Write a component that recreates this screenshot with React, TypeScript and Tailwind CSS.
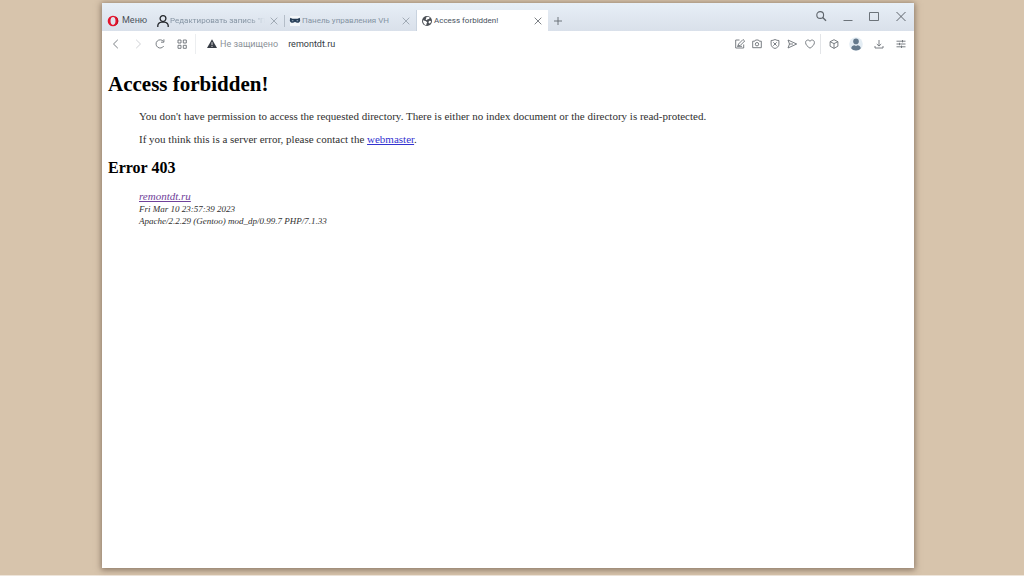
import type { ReactNode } from "react";

interface IconProps {
  children: ReactNode;
  className?: string;
}

function Icon({ children, className = "size-3" }: IconProps) {
  return (
    <svg
      viewBox="0 0 12 12"
      fill="none"
      stroke="currentColor"
      strokeWidth="0.9"
      aria-hidden="true"
      className={`shrink-0 ${className}`}
    >
      {children}
    </svg>
  );
}

interface IconButtonProps {
  label: string;
  className: string;
  children: ReactNode;
}

function IconButton({ label, className, children }: IconButtonProps) {
  return (
    <button
      type="button"
      aria-label={label}
      className={`flex shrink-0 items-center justify-center ${className}`}
    >
      {children}
    </button>
  );
}

function PersonIcon() {
  return (
    <Icon className="size-3 text-[#24272c]">
      <g strokeWidth="1.3">
        <circle cx="6" cy="3.6" r="2.9" />
        <path d="M.8 12V10.6C1 8.6 2.6 7.4 4.6 7.1h2.8c2 .3 3.6 1.5 3.8 3.5V12" />
      </g>
    </Icon>
  );
}

function PanelIcon() {
  return (
    <svg viewBox="0 0 12 12" aria-hidden="true" className="size-3 shrink-0">
      <path fill="#f4f7fa" d="M1 1h10v10H1z" />
      <path
        fill="#273e57"
        d="M1.2 2.8l2.2.9h5.200l2.200-.9.4 2.600c-.3 1.600-1.300 2.400-2.700 2.400-1 0-1.800-.3-2.500-1-.7.7-1.500 1-2.500 1C2.100 7.800 1.100 7 .8 5.400z"
      />
      <path fill="#9db0c2" d="M2.800 5.200h1.600v1H2.800zM7.600 5.200h1.600v1H7.600z" />
    </svg>
  );
}

function GlobeIcon() {
  return (
    <svg viewBox="0 0 12 12" aria-hidden="true" className="size-3 shrink-0">
      <circle cx="6" cy="6" r="5" fill="#4c5056" />
      <path
        fill="#fff"
        d="M1.900 5.300L4.600 6l1.600 1.300-.6 1.200-.4 1.700C3.200 9.900 1.900 8 1.900 5.300zM5.400 2l2-.2 1.500 1-1 1.300-1.300.1-.9 1-1.100-.6.6-1.400zM8.200 5.800l1.900.2-.6 2-1.300.6-.8-1.300z"
      />
    </svg>
  );
}

interface TabProps {
  title: string;
  icon: ReactNode;
  active?: boolean;
  faded?: boolean;
}

function Tab({ title, icon, active = false, faded = false }: TabProps) {
  return (
    <div
      className={`flex h-[21px] w-[131px] min-w-0 items-center pl-1 ${
        active ? "bg-white text-[#46505b]" : "text-[#8594a3]"
      }`}
    >
      <button type="button" className="flex h-full min-w-0 flex-1 items-center text-left">
        {icon}
        <span
          className={`block min-w-0 flex-1 whitespace-nowrap pl-px text-[8px] leading-3 ${
            faded ? "[mask-image:linear-gradient(to_right,#000_85%,transparent)]" : ""
          }`}
        >
          {title}
        </span>
      </button>
      <IconButton label={`Закрыть ${title}`} className="mr-px h-[21px] w-[18px]">
        <Icon className={`size-[10px] ${active ? "text-[#50565d]" : "text-[#8c96a1]"}`}>
          <path d="M2 2l8 8M10 2l-8 8" />
        </Icon>
      </IconButton>
    </div>
  );
}

function TabBar() {
  return (
    <header className="flex h-7 items-end bg-linear-to-b from-[#e7eff7] to-[#d9e0ea]">
      <button
        type="button"
        className="flex h-[21px] w-[51px] shrink-0 items-center gap-[3px] pl-[5px] text-[9px] text-[#4c535b]"
      >
        <svg viewBox="0 0 12 12" aria-hidden="true" className="size-3 shrink-0">
          <path
            fill="#e5142d"
            fillRule="evenodd"
            d="M6 .7a5.300 5.300 0 100 10.600A5.300 5.300 0 006 .7zm0 1.400c1.600 0 2.500 1.600 2.500 3.900S7.600 9.900 6 9.900 3.500 8.300 3.500 6 4.400 2.100 6 2.100z"
          />
          <path
            fill="#b31022"
            d="M7.500 1.600c1.900.5 2.800 2.200 2.800 4.400s-.9 3.900-2.800 4.400c2.100.1 3.800-1.900 3.800-4.400S9.600 1.500 7.500 1.600z"
          />
        </svg>
        Меню
      </button>

      <nav aria-label="Вкладки" className="flex min-w-0 items-end">
        <Tab title={'Редактировать запись "Пе'} icon={<PersonIcon />} faded />
        <span className="mb-1 h-3 w-px shrink-0 bg-[#b4bdc8]" />
        <Tab title="Панель управления VH" icon={<PanelIcon />} />
        <span className="h-[21px] w-px shrink-0 bg-[#c9d3df]" />
        <Tab title="Access forbidden!" icon={<GlobeIcon />} active />
      </nav>
      <IconButton label="Новая вкладка" className="h-[21px] w-5 text-[#626971]">
        <Icon>
          <path d="M6 2v8M2 6h8" />
        </Icon>
      </IconButton>

      <div className="ml-auto flex shrink-0 self-start pt-px text-[#5f656c]">
        <IconButton label="Поиск" className="h-6 w-[27px]">
          <Icon>
            <circle cx="5.200" cy="5" r="3.400" strokeWidth="1.100" />
            <path d="M7.700 7.500l3.300 3.200" strokeWidth="1.400" />
          </Icon>
        </IconButton>
        <IconButton label="Свернуть" className="h-6 w-[27px]">
          <Icon>
            <path d="M1.500 10.500h9" />
          </Icon>
        </IconButton>
        <IconButton label="Развернуть" className="h-6 w-[26px]">
          <Icon>
            <path d="M1.500 2.500h9v8h-9z" />
          </Icon>
        </IconButton>
        <IconButton label="Закрыть окно" className="h-6 w-[27px]">
          <Icon>
            <path d="M1.500 2l9 9M10.500 2l-9 9" strokeWidth="1" />
          </Icon>
        </IconButton>
      </div>
    </header>
  );
}

function Toolbar() {
  return (
    <div className="flex h-[26px] items-center text-[#6b7076]">
      <div className="flex shrink-0 pl-[3px]">
        <IconButton label="Назад" className="h-6 w-[22px]">
          <Icon>
            <path d="M7.800 1.800L3.500 6l4.300 4.200" />
          </Icon>
        </IconButton>
        <IconButton label="Вперёд" className="h-6 w-[22px] text-[#c9ccd0]">
          <Icon>
            <path d="M4.200 1.800L8.500 6l-4.300 4.200" />
          </Icon>
        </IconButton>
        <IconButton label="Обновить" className="h-6 w-[22px]">
          <Icon>
            <path d="M9.700 8A4.100 4.100 0 119.400 3.400M9.900 1.300v2.900H7" />
          </Icon>
        </IconButton>
        <IconButton label="Экспресс-панель" className="h-6 w-[22px]">
          <Icon>
            <path d="M2 2h3v3H2zM7.300 2h3v3h-3zM2 7.300h3v3H2zM7.300 7.300h3v3h-3z" />
          </Icon>
        </IconButton>
      </div>
      <span className="ml-[2px] h-5 w-px shrink-0 bg-[#eceef0]" />

      <button type="button" className="ml-[10px] flex shrink-0 items-center gap-[2px] text-[#8b9198]">
        <svg viewBox="0 0 12 12" aria-hidden="true" className="size-3 shrink-0">
          <path fill="#373c45" d="M6 1.200L11 10H1z" />
          <path stroke="#fff" strokeWidth="0.800" d="M6 4.200v3M6 8v1" />
        </svg>
        <span className="text-[9px] leading-4">Не защищено</span>
      </button>
      <input
        type="text"
        aria-label="Адрес"
        defaultValue="remontdt.ru"
        className="ml-[10px] h-5 min-w-0 flex-1 bg-transparent text-[9px] text-[#333a42] outline-none"
      />

      <div className="flex shrink-0">
        <IconButton label="Изменить" className="h-6 w-[17px]">
          <Icon>
            <path d="M5.500 2H1.700v8h8V6.500M4 8l.5-2 4.500-4.500L10.700 3 6.200 7.500zM3 8.300h5" />
          </Icon>
        </IconButton>
        <IconButton label="Снимок" className="h-6 w-[18px]">
          <Icon>
            <path d="M1.700 3.200h2l.8-1.200h3l.8 1.200h2v6.500H1.700z" />
            <circle cx="6" cy="6.200" r="1.700" />
          </Icon>
        </IconButton>
        <IconButton label="Блокировка рекламы" className="h-6 w-[17px]">
          <Icon>
            <path d="M6 1.500c1.400.8 2.700 1 3.900 1v3.700c0 2.200-1.600 3.500-3.900 4.300-2.300-.8-3.900-2.100-3.900-4.300V2.500c1.200 0 2.500-.2 3.900-1zM4.300 4.300l3.400 3.400M7.700 4.300L4.300 7.700" />
          </Icon>
        </IconButton>
        <IconButton label="Отправить" className="h-6 w-[18px]">
          <Icon>
            <path d="M2 2l8.700 4L2 10l1.500-4zM3.500 6H7" />
          </Icon>
        </IconButton>
        <IconButton label="В избранное" className="h-6 w-[17px]">
          <Icon>
            <path d="M6 10.200C3.400 8.500 1.600 6.700 1.600 4.500 1.600 1.800 5 1.200 6 3.300c1-2.100 4.400-1.500 4.400 1.200 0 2.200-1.800 4-4.400 5.700z" />
          </Icon>
        </IconButton>
        <span className="ml-[2px] h-5 w-px self-center bg-[#e3e5e8]" />
        <IconButton label="Расширения" className="ml-[2px] h-6 w-[22px]">
          <Icon>
            <path d="M6 1.700l3.900 2v4.500L6 10.400 2.100 8.200V3.700zM2.100 3.700L6 5.600l3.900-1.900M6 5.600v4.800" />
          </Icon>
        </IconButton>
        <IconButton label="Профиль" className="h-6 w-[22px]">
          <svg viewBox="0 0 14 14" aria-hidden="true" className="size-[14px]">
            <circle cx="7" cy="7" r="6.800" fill="#e4edf4" />
            <circle cx="7" cy="4.400" r="2.800" fill="#64798c" />
            <path
              fill="#64798c"
              d="M2.200 11.200C2.400 9.200 4 8.500 5.500 8.300L7 9l1.500-.7c1.500.2 3.100.9 3.300 2.900-2 3-7.600 3-9.600 0z"
            />
          </svg>
        </IconButton>
        <IconButton label="Загрузки" className="h-6 w-[23px]">
          <Icon>
            <path d="M6 2v6M3.800 6L6 8.100 8.200 6M2 8v2h8V8" />
          </Icon>
        </IconButton>
        <IconButton label="Настройки" className="mr-[2px] h-6 w-[22px]">
          <Icon>
            <path d="M1.500 3.200h9M1.500 6h9M1.500 8.800h9M7.500 2v2.400M4.500 4.800v2.400M6.500 7.600V10" />
          </Icon>
        </IconButton>
      </div>
    </div>
  );
}

function ErrorPage() {
  return (
    <main className="px-[6px] pt-[15px] font-['Liberation_Serif',serif] text-[11px] leading-[13px] text-[#303030]">
      <h1 className="text-[21px] font-bold leading-6 text-black">Access forbidden!</h1>
      <div className="mt-[14px] px-[31px]">
        <p>
          You don't have permission to access the requested directory. There is either no index
          document or the directory is read-protected.
        </p>
        <p className="mt-[10px]">
          If you think this is a server error, please contact the{" "}
          <a href="mailto:webmaster@remontdt.ru" className="text-[#3333d0] underline">
            webmaster
          </a>
          .
        </p>
      </div>
      <h2 className="mt-3 text-[16px] font-bold leading-5 text-black">Error 403</h2>
      <address className="mt-3 px-[31px] text-[9px] italic leading-[12px]">
        <a href="/" className="block w-fit text-[11px] leading-[13px] text-[#70419a] underline">
          remontdt.ru
        </a>
        Fri Mar 10 23:57:39 2023
        <br />
        Apache/2.2.29 (Gentoo) mod_dp/0.99.7 PHP/7.1.33
      </address>
    </main>
  );
}

export default function App() {
  return (
    <div className="flex min-h-screen flex-col border-b border-[#eee5da] bg-[#d7c4ac] pt-[3px] pr-[110px] pb-[7px] pl-[102px]">
      <div className="flex-1 bg-white font-[Roboto,sans-serif] shadow-[0_1px_6px_1px_rgba(90,70,55,0.6)]">
        <TabBar />
        <Toolbar />
        <ErrorPage />
      </div>
    </div>
  );
}
